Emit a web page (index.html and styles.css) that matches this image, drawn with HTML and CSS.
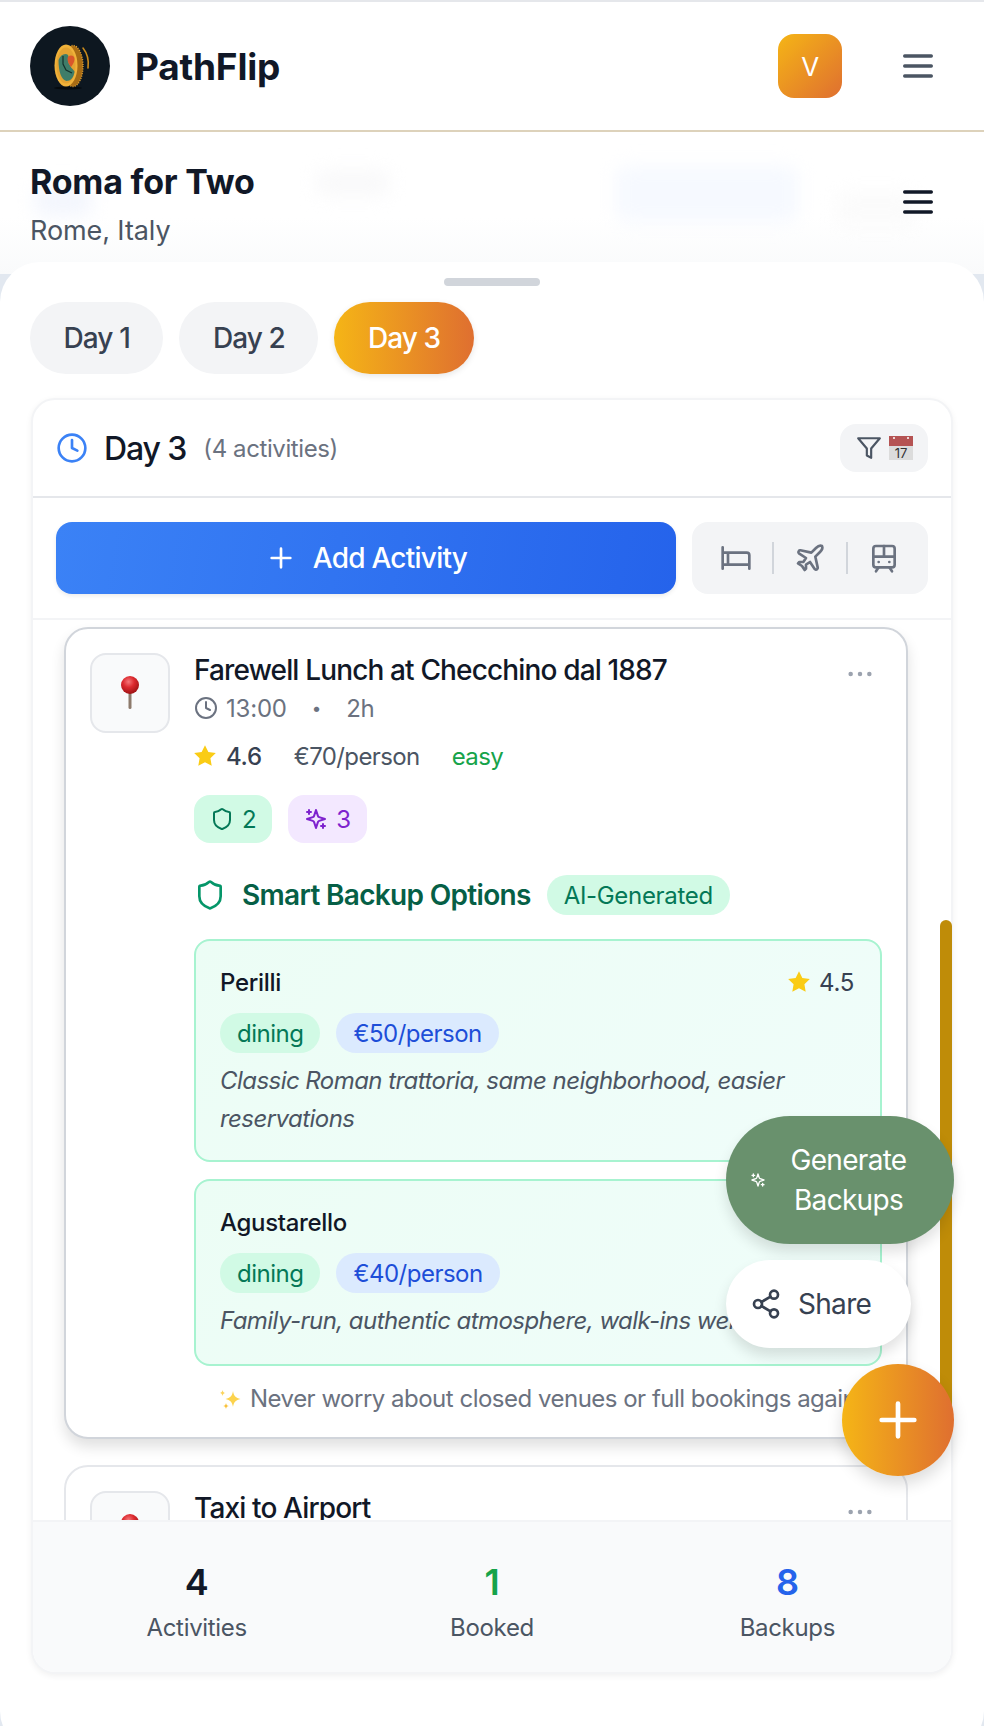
FILE: index.html
```html
<!DOCTYPE html>
<html lang="en">

<head>
    <meta charset="UTF-8">
    <meta name="viewport" content="width=device-width, initial-scale=1.0">
    <title>PathFlip</title>
    <link rel="stylesheet" href="styles.css">
</head>

<body>
    <svg class="sprite" aria-hidden="true">
        <defs>
            <radialGradient id="pinHead" cx="42%" cy="32%" r="70%">
                <stop offset="0" stop-color="#f4777a" />
                <stop offset="0.45" stop-color="#dd2a2f" />
                <stop offset="1" stop-color="#9b1113" />
            </radialGradient>
        </defs>
        <symbol id="i-menu" viewBox="0 0 24 24"><path d="M4 6h16M4 12h16M4 18h16" /></symbol>
        <symbol id="i-clock" viewBox="0 0 24 24"><circle cx="12" cy="12" r="10" /><path d="M12 6v6l4 2" /></symbol>
        <symbol id="i-filter" viewBox="0 0 24 24"><path d="M22 3H2l8 9.46V19l4 2v-8.54L22 3z" /></symbol>
        <symbol id="i-plus" viewBox="0 0 24 24"><path d="M5 12h14M12 5v14" /></symbol>
        <symbol id="i-bed" viewBox="0 0 24 24"><path d="M2 4v16M2 8h18a2 2 0 0 1 2 2v10M2 17h20M6 8v9" /></symbol>
        <symbol id="i-plane" viewBox="0 0 24 24"><path d="M17.8 19.2 16 11l3.5-3.5C21 6 21.5 4 21 3c-1-.5-3 0-4.500 1.500L13 8 4.800 6.200c-.5-.1-.9.1-1.100.5l-.3.5c-.2.5-.1 1 .3 1.300L9 12l-2 3H4l-1 1 3 2 2 3 1-1v-3l3-2 3.500 5.300c.3.4.8.5 1.300.3l.5-.2c.4-.3.6-.7.5-1.200z" /></symbol>
        <symbol id="i-tram" viewBox="0 0 24 24"><rect x="4" y="3" width="16" height="16" rx="2" /><path d="M4 11h16M12 3v8M8 19l-2 3M18 22l-2-3M8 15h.01M16 15h.01" /></symbol>
        <symbol id="i-shield" viewBox="0 0 24 24"><path d="M20 13c0 5-3.500 7.500-7.660 8.950a1 1 0 0 1-.67-.01C7.500 20.500 4 18 4 13V6a1 1 0 0 1 1-1c2 0 4.500-1.200 6.240-2.720a1.170 1.170 0 0 1 1.520 0C14.510 3.810 17 5 19 5a1 1 0 0 1 1 1z" /></symbol>
        <symbol id="i-sparkles" viewBox="0 0 24 24"><path d="M12 3l-1.912 5.813a2 2 0 0 1-1.275 1.275L3 12l5.813 1.912a2 2 0 0 1 1.275 1.275L12 21l1.912-5.813a2 2 0 0 1 1.275-1.275L21 12l-5.813-1.912a2 2 0 0 1-1.275-1.275L12 3z" /><path d="M5 3v4M19 17v4M3 5h4M17 19h4" /></symbol>
        <symbol id="i-share" viewBox="0 0 24 24"><circle cx="18" cy="5" r="3" /><circle cx="6" cy="12" r="3" /><circle cx="18" cy="19" r="3" /><path d="M8.590 13.510l6.830 3.980M15.410 6.510l-6.820 3.980" /></symbol>
        <symbol id="i-star" viewBox="0 0 24 24"><path class="solid" d="M12 2l3.090 6.260L22 9.270l-5 4.870 1.180 6.880L12 17.770l-6.180 3.250L7 14.140 2 9.270l6.910-1.010L12 2z" /></symbol>
        <symbol id="i-dots" viewBox="0 0 24 24"><path d="M5 12h.01M12 12h.01M19 12h.01" /></symbol>
        <symbol id="i-pin" viewBox="0 0 40 40">
            <rect class="solid" x="18.500" y="18" width="3" height="18" rx="1.500" fill="#8d7a6c" />
            <circle class="solid" cx="20" cy="12" r="9" fill="url(#pinHead)" />
        </symbol>
    </svg>

    <header class="app-header">
        <div class="brand">
            <svg class="logo" viewBox="0 0 80 80" aria-hidden="true">
                <circle cx="40" cy="40" r="40" fill="#0d1720" />
                <path d="M53 22c4 5 6 13 5 20" fill="none" stroke="#c98a1c" stroke-width="1.600" stroke-linecap="round" />
                <ellipse cx="38" cy="62" rx="14" ry="1.500" fill="#050a0e" />
                <ellipse cx="43" cy="40" rx="10" ry="20.500" fill="#a86c14" stroke="#e0a032" stroke-width="1.400" stroke-dasharray="1 1.400" />
                <ellipse cx="36" cy="39.500" rx="11.500" ry="21" fill="#f0b23a" />
                <ellipse cx="36" cy="39.500" rx="9.500" ry="18" fill="#e3a332" />
                <path d="M28.500 34c1.500-4 4-6 7-6 2 0 3 1 3 3v6l3 5c2 2 3 3 3 4-1 6-4 9-8 9-5-1-8-9-8-21z" fill="#3f7d69" />
                <path d="M33 30v8l3 6 6 3" fill="none" stroke="#13302b" stroke-width="1.200" />
                <path d="M41 41c-2-3-3.500-5-3.500-8a3.500 3.500 0 0 1 7 0c0 3-1.500 5-3.500 8z" fill="#d9572b" />
            </svg>
            <span class="brand-name">PathFlip</span>
        </div>
        <div class="header-actions">
            <div class="avatar">V</div>
            <svg class="icon menu-icon"><use href="#i-menu" /></svg>
        </div>
    </header>

    <div class="trip-bar">
        <span class="blur-blob blob-a"></span>
        <span class="blur-blob blob-b"></span>
        <span class="blur-blob blob-c"></span>
        <span class="blur-blob blob-d"></span>
        <div class="trip-info">
            <h1>Roma for Two</h1>
            <p>Rome, Italy</p>
        </div>
        <svg class="icon menu-icon dark"><use href="#i-menu" /></svg>
    </div>

    <main class="sheet">
        <div class="handle"></div>

        <nav class="day-tabs">
            <button class="day-tab">Day 1</button>
            <button class="day-tab">Day 2</button>
            <button class="day-tab active">Day 3</button>
        </nav>

        <section class="day-card">
            <div class="day-head">
                <svg class="icon day-clock"><use href="#i-clock" /></svg>
                <h2>Day 3</h2>
                <span class="day-count">(4 activities)</span>
                <div class="filter-box">
                    <svg class="icon filter-icon"><use href="#i-filter" /></svg>
                    <svg class="calendar" viewBox="0 0 24 24" aria-hidden="true">
                        <rect width="24" height="10" fill="#b55353" />
                        <rect y="10" width="24" height="14" fill="#dcdcdc" />
                        <circle cx="5" cy="2" r="1" fill="#fff" />
                        <circle cx="19" cy="2" r="1" fill="#fff" />
                        <text x="12" y="22" text-anchor="middle" class="calendar-day">17</text>
                    </svg>
                </div>
            </div>

            <div class="day-actions">
                <button class="add-activity">
                    <svg class="icon add-plus"><use href="#i-plus" /></svg>
                    Add Activity
                </button>
                <div class="quick-add">
                    <svg class="icon"><use href="#i-bed" /></svg>
                    <span class="quick-sep"></span>
                    <svg class="icon"><use href="#i-plane" /></svg>
                    <span class="quick-sep"></span>
                    <svg class="icon"><use href="#i-tram" /></svg>
                </div>
            </div>

            <div class="activity-list">
                <article class="activity open">
                    <div class="activity-thumb"><svg class="pin"><use href="#i-pin" /></svg></div>
                    <div class="activity-body">
                        <div class="activity-title-row">
                            <h3>Farewell Lunch at Checchino dal 1887</h3>
                            <svg class="icon dots"><use href="#i-dots" /></svg>
                        </div>
                        <div class="time-row">
                            <svg class="icon time-icon"><use href="#i-clock" /></svg>
                            <span>13:00</span>
                            <span class="time-dot">•</span>
                            <span>2h</span>
                        </div>
                        <div class="meta-row">
                            <span class="rating"><svg class="star"><use href="#i-star" /></svg>4.6</span>
                            <span class="price">€70/person</span>
                            <span class="easy">easy</span>
                        </div>
                        <div class="badge-row">
                            <span class="count-badge green"><svg class="icon"><use href="#i-shield" /></svg>2</span>
                            <span class="count-badge purple"><svg class="icon"><use href="#i-sparkles" /></svg>3</span>
                        </div>

                        <div class="backup-head">
                            <svg class="icon backup-shield"><use href="#i-shield" /></svg>
                            <h4>Smart Backup Options</h4>
                            <span class="ai-tag">AI-Generated</span>
                        </div>

                        <div class="backup-card">
                            <div class="backup-top">
                                <span class="backup-name">Perilli</span>
                                <span class="backup-rating"><svg class="star"><use href="#i-star" /></svg>4.5</span>
                            </div>
                            <div class="backup-tags">
                                <span class="tag tag-green">dining</span>
                                <span class="tag tag-blue">€50/person</span>
                            </div>
                            <p>Classic Roman trattoria, same neighborhood, easier reservations</p>
                        </div>

                        <div class="backup-card">
                            <div class="backup-top">
                                <span class="backup-name">Agustarello</span>
                            </div>
                            <div class="backup-tags">
                                <span class="tag tag-green">dining</span>
                                <span class="tag tag-blue">€40/person</span>
                            </div>
                            <p class="one-line">Family-run, authentic atmosphere, walk-ins welcome</p>
                        </div>

                        <div class="backup-note">
                            <svg class="note-spark" viewBox="0 0 24 24" aria-hidden="true">
                                <path d="M13 4c.8 5 2.800 7 7.500 8-4.700 1-6.700 3-7.500 8-.8-5-2.800-7-7.500-8 4.700-1 6.700-3 7.500-8z" fill="#fcd34d" />
                                <path d="M2.500 3c.4 2 1 2.600 3 3-2 .4-2.600 1-3 3-.4-2-1-2.600-3-3 2-.4 2.600-1 3-3z" fill="#fbd35a" />
                                <path d="M6 16c.4 2 1 2.600 3 3-2 .4-2.600 1-3 3-.4-2-1-2.600-3-3 2-.4 2.600-1 3-3z" fill="#f9c23c" />
                            </svg>
                            Never worry about closed venues or full bookings again
                        </div>
                    </div>
                </article>

                <article class="activity">
                    <div class="activity-thumb"><svg class="pin"><use href="#i-pin" /></svg></div>
                    <div class="activity-body">
                        <div class="activity-title-row">
                            <h3>Taxi to Airport</h3>
                            <svg class="icon dots"><use href="#i-dots" /></svg>
                        </div>
                    </div>
                </article>
            </div>

            <div class="day-stats">
                <div class="stat"><strong>4</strong><span>Activities</span></div>
                <div class="stat"><strong class="stat-green">1</strong><span>Booked</span></div>
                <div class="stat"><strong class="stat-blue">8</strong><span>Backups</span></div>
            </div>
        </section>
    </main>

    <div class="scroll-thumb"></div>

    <div class="fab-stack">
        <button class="fab-generate">
            <svg class="icon"><use href="#i-sparkles" /></svg>
            <span>Generate Backups</span>
        </button>
        <button class="fab-share">
            <svg class="icon"><use href="#i-share" /></svg>
            Share
        </button>
        <button class="fab-plus"><svg class="icon"><use href="#i-plus" /></svg></button>
    </div>
</body>

</html>
```

FILE: styles.css
```css
* {
    box-sizing: border-box;
}

html,
body {
    margin: 0;
    height: 1726px;
    overflow: hidden;
}

body {
    position: relative;
    font-family: Inter, "Noto Sans", sans-serif;
    letter-spacing: -0.02em;
    background-color: #e2e8f0;
    color: #111827;
    border-top: 2px solid #e5e7eb;
}

h1,
h2,
h3,
h4,
p {
    margin: 0;
}

button {
    font-family: inherit;
    letter-spacing: inherit;
    border: none;
    cursor: pointer;
}

/* holds the symbols, takes no room */
.sprite {
    position: absolute;
    width: 0;
    height: 0;
}

.icon {
    fill: none;
    stroke: currentColor;
    stroke-width: 2;
    stroke-linecap: round;
    stroke-linejoin: round;
    flex: none;
}

.solid {
    stroke: none;
}

/* top header */
.app-header {
    height: 130px;
    padding: 0 46px 0 30px;
    display: flex;
    align-items: center;
    justify-content: space-between;
    background-color: #fff;
    border-bottom: 2px solid #ddd2bb;
}

.brand {
    display: flex;
    align-items: center;
    gap: 25px;
}

.logo {
    width: 80px;
    height: 80px;
}

.brand-name {
    font-size: 37px;
    font-weight: 700;
    letter-spacing: -0.2px;
}

.header-actions {
    display: flex;
    align-items: center;
    gap: 56px;
}

.avatar {
    width: 64px;
    height: 64px;
    border-radius: 16px;
    background: linear-gradient(135deg, #f5b516, #df6f30);
    color: #fff;
    font-size: 26px;
    display: flex;
    align-items: center;
    justify-content: center;
}

.menu-icon {
    width: 40px;
    height: 40px;
    color: #4b5563;
}

.menu-icon.dark {
    color: #111827;
    margin-top: 20px;
}

/* blurred trip bar behind the sheet */
.trip-bar {
    position: relative;
    height: 142px;
    padding: 30px 46px 0 30px;
    display: flex;
    justify-content: space-between;
    align-items: flex-start;
    background: linear-gradient(#fff 60%, #f9fafb);
    overflow: hidden;
}

.trip-info,
.trip-bar .menu-icon {
    position: relative;
}

.trip-info h1 {
    font-size: 34px;
    line-height: 40px;
    font-weight: 700;
    letter-spacing: -0.2px;
}

.trip-info p {
    margin-top: 12px;
    font-size: 27px;
    line-height: 34px;
    letter-spacing: -0.1px;
    color: #4b5563;
}

.blur-blob {
    position: absolute;
    filter: blur(9px);
    border-radius: 10px;
}

.blob-a {
    left: 34px;
    top: 54px;
    width: 58px;
    height: 30px;
    background-color: #f3f6fd;
}

.blob-b {
    left: 316px;
    top: 38px;
    width: 74px;
    height: 26px;
    background-color: #f9f9fa;
}

.blob-c {
    left: 616px;
    top: 34px;
    width: 182px;
    height: 56px;
    background-color: #f6f9ff;
}

.blob-d {
    left: 836px;
    top: 60px;
    width: 80px;
    height: 34px;
    background-color: #fbfbfb;
}

/* bottom sheet */
.sheet {
    position: absolute;
    left: 0;
    right: 0;
    top: 260px;
    height: 1489px;
    padding: 16px 31px 0;
    background-color: #fff;
    border-radius: 40px;
    display: flex;
    flex-direction: column;
}

.handle {
    align-self: center;
    width: 96px;
    height: 8px;
    border-radius: 4px;
    background-color: #d1d5db;
}

.day-tabs {
    margin: 16px 0 24px -1px;
    display: flex;
    gap: 16px;
}

.day-tab {
    height: 72px;
    padding: 0 33.500px;
    border-radius: 36px;
    background-color: #f3f4f6;
    color: #374151;
    font-size: 28px;
    font-weight: 500;
    letter-spacing: -0.9px;
}

.day-tab.active {
    background: linear-gradient(90deg, #f5b516, #df6f30);
    color: #fff;
    box-shadow: 0 2px 6px rgba(0, 0, 0, 0.1);
}

.day-card {
    height: 1276px;
    border: 2px solid #f3f4f6;
    border-radius: 24px;
    box-shadow: 0 2px 6px rgba(0, 0, 0, 0.06);
    display: flex;
    flex-direction: column;
    overflow: hidden;
    background-color: #fff;
}

.day-head {
    height: 98px;
    padding: 0 23px;
    flex: none;
    display: flex;
    align-items: center;
    border-bottom: 2px solid #e5e7eb;
}

.day-clock {
    width: 32px;
    height: 32px;
    color: #3b82f6;
    margin-right: 16px;
}

.day-head h2 {
    font-size: 32px;
    font-weight: 500;
    letter-spacing: -1.1px;
}

.day-count {
    margin-left: 17px;
    font-size: 24px;
    letter-spacing: -0.4px;
    color: #6b7280;
}

.filter-box {
    margin-left: auto;
    width: 88px;
    height: 48px;
    border-radius: 16px;
    background-color: #f3f4f6;
    display: flex;
    align-items: center;
    justify-content: center;
    gap: 7px;
}

.filter-icon {
    width: 26px;
    height: 26px;
    color: #4b5563;
}

.calendar {
    width: 24px;
    height: 24px;
}

.calendar-day {
    font-size: 13px;
    letter-spacing: 0;
    fill: #333;
}

.day-actions {
    height: 122px;
    padding: 24px 23px;
    flex: none;
    display: flex;
    gap: 16px;
    border-bottom: 2px solid #f3f4f6;
}

.add-activity {
    flex: 1;
    border-radius: 16px;
    background: linear-gradient(100deg, #3b82f6, #2563eb);
    box-shadow: 0 2px 4px rgba(0, 0, 0, 0.08);
    color: #fff;
    font-size: 28px;
    font-weight: 500;
    letter-spacing: -0.75px;
    display: flex;
    align-items: center;
    justify-content: center;
    gap: 16px;
}

.add-plus {
    width: 32px;
    height: 32px;
}

.quick-add {
    width: 236px;
    padding: 0 28px;
    border-radius: 16px;
    background-color: #f3f4f6;
    color: #6b7280;
    display: flex;
    align-items: center;
    justify-content: center;
    gap: 20px;
}

.quick-add .icon {
    width: 32px;
    height: 32px;
}

.quick-sep {
    width: 2px;
    height: 32px;
    background-color: #d1d5db;
}

/* activity list */
.activity-list {
    flex: 1;
    min-height: 0;
    overflow: hidden;
    padding: 7px 43px 0 31px;
    display: flex;
    flex-direction: column;
    gap: 26px;
}

.activity {
    flex: none;
    padding: 24px;
    border: 2px solid #e5e7eb;
    border-radius: 24px;
    background-color: #fff;
    display: flex;
    gap: 24px;
}

.activity.open {
    padding-bottom: 22px;
    border-color: #d1d5db;
    box-shadow: 0 8px 14px rgba(0, 0, 0, 0.12);
}

.activity-thumb {
    width: 80px;
    height: 80px;
    flex: none;
    border: 2px solid #e5e7eb;
    border-radius: 16px;
    background-color: #f9fafb;
    display: flex;
    align-items: center;
    justify-content: center;
}

.pin {
    width: 40px;
    height: 40px;
}

.activity-body {
    flex: 1;
    min-width: 0;
}

.activity-title-row {
    display: flex;
    justify-content: space-between;
    align-items: center;
    height: 36px;
    margin-top: -1px;
}

.activity-title-row h3 {
    font-size: 28px;
    font-weight: 500;
    letter-spacing: -0.85px;
    white-space: nowrap;
}

.dots {
    width: 32px;
    height: 32px;
    stroke-width: 3.400;
    color: #9ca3af;
    margin: 8px 6px 0 0;
}

.time-row {
    margin-top: 4px;
    height: 32px;
    display: flex;
    align-items: center;
    font-size: 24px;
    letter-spacing: -0.2px;
    color: #6b7280;
}

.time-icon {
    width: 24px;
    height: 24px;
    margin-right: 8px;
}

.time-dot {
    margin: 0 25px;
    font-size: 17px;
}

.meta-row {
    margin-top: 16px;
    height: 32px;
    display: flex;
    align-items: center;
    gap: 32px;
    font-size: 24px;
}

.star {
    width: 26px;
    height: 26px;
    fill: #facc15;
    margin-left: -2px;
}

.rating {
    display: flex;
    align-items: center;
    gap: 8px;
    font-weight: 500;
    color: #374151;
}

.price {
    letter-spacing: -0.6px;
    color: #4b5563;
}

.easy {
    letter-spacing: -0.6px;
    color: #16a34a;
}

.badge-row {
    margin-top: 23px;
    display: flex;
    gap: 16px;
}

.count-badge {
    height: 48px;
    padding: 0 16px;
    border-radius: 16px;
    font-size: 24px;
    display: flex;
    align-items: center;
    gap: 8px;
}

.count-badge .icon {
    width: 24px;
    height: 24px;
}

.count-badge.green {
    background-color: #d1fae5;
    color: #047857;
}

.count-badge.purple {
    background-color: #f3e8ff;
    color: #7e22ce;
}

.backup-head {
    margin-top: 32px;
    height: 40px;
    display: flex;
    align-items: center;
}

.backup-shield {
    width: 32px;
    height: 32px;
    color: #059669;
    margin-right: 16px;
}

.backup-head h4 {
    font-size: 28px;
    font-weight: 600;
    letter-spacing: -0.68px;
    color: #065f46;
}

.ai-tag {
    margin-left: 16px;
    height: 40px;
    padding: 0 17px;
    border-radius: 20px;
    background-color: #d1fae5;
    color: #047857;
    font-size: 24px;
    display: flex;
    align-items: center;
}

.backup-card {
    margin-top: 24px;
    padding: 24px 24px 22px;
    border: 2px solid #a7f3d0;
    border-radius: 16px;
    background: linear-gradient(135deg, #ecfdf5, #f0fdfa);
}

.backup-card + .backup-card {
    margin-top: 17px;
    padding-bottom: 24px;
}

.backup-top {
    height: 34px;
    display: flex;
    justify-content: space-between;
    align-items: center;
    font-size: 24px;
}

.backup-name {
    font-weight: 500;
}

.backup-rating {
    display: flex;
    align-items: center;
    gap: 7px;
    margin-right: 2px;
    color: #374151;
}

.backup-tags {
    margin-top: 14px;
    display: flex;
    gap: 16px;
}

.tag {
    height: 40px;
    padding: 0 17px;
    border-radius: 20px;
    font-size: 24px;
    letter-spacing: -0.5px;
    display: flex;
    align-items: center;
}

.tag-green {
    background-color: #d1fae5;
    color: #047857;
}

.tag-blue {
    background-color: #dbeafe;
    color: #1d4ed8;
}

.backup-card p {
    margin-top: 9px;
    font-size: 24px;
    line-height: 38px;
    letter-spacing: -0.55px;
    font-style: italic;
    color: #4b5563;
}

.backup-card p.one-line {
    white-space: nowrap;
}

.backup-note {
    margin: 17px 0 0 26px;
    font-size: 24px;
    line-height: 32px;
    letter-spacing: -0.5px;
    color: #6b7280;
    white-space: nowrap;
    display: flex;
    align-items: center;
    gap: 6px;
}

.note-spark {
    width: 24px;
    height: 24px;
}

/* totals */
.day-stats {
    height: 152px;
    flex: none;
    padding: 10px 16px 0;
    display: grid;
    grid-template-columns: repeat(3, 1fr);
    align-items: center;
    background-color: #f9fafb;
    border-top: 2px solid #f3f4f6;
    position: relative;
}

.stat {
    text-align: center;
}

.stat strong {
    display: block;
    font-size: 36px;
    line-height: 44px;
    font-weight: 600;
}

.stat span {
    display: block;
    margin-top: 8px;
    font-size: 24px;
    line-height: 32px;
    color: #4b5563;
}

.stat-green {
    color: #16a34a;
}

.stat-blue {
    color: #2563eb;
}

/* things floating over the sheet */
.scroll-thumb {
    position: absolute;
    left: 940px;
    top: 918px;
    width: 12px;
    height: 500px;
    border-radius: 6px;
    background-color: #bf8c08;
}

.fab-stack {
    position: absolute;
    left: 726px;
    top: 1114px;
    width: 228px;
    display: flex;
    flex-direction: column;
    gap: 16px;
}

.fab-generate {
    height: 128px;
    padding: 0 38px 0 24px;
    border-radius: 64px;
    background-color: #69916d;
    color: #fff;
    font-size: 28px;
    line-height: 40px;
    letter-spacing: -0.7px;
    display: flex;
    align-items: center;
    gap: 15px;
    box-shadow: 0 8px 14px rgba(0, 0, 0, 0.12);
}

.fab-generate .icon {
    width: 16px;
    height: 16px;
}

.fab-generate span {
    flex: 1;
    text-align: center;
}

.fab-share {
    align-self: flex-start;
    width: 185px;
    height: 88px;
    padding: 0 24px;
    border-radius: 44px;
    background-color: #fff;
    color: #374151;
    font-size: 28px;
    letter-spacing: -0.7px;
    display: flex;
    align-items: center;
    gap: 16px;
    box-shadow: 0 8px 14px rgba(0, 0, 0, 0.12);
}

.fab-share .icon {
    width: 32px;
    height: 32px;
}

.fab-plus {
    align-self: flex-end;
    width: 112px;
    height: 112px;
    border-radius: 50%;
    padding: 0;
    background: linear-gradient(90deg, #f5b516, #df6f30);
    color: #fff;
    display: flex;
    align-items: center;
    justify-content: center;
    box-shadow: 0 8px 16px rgba(0, 0, 0, 0.14);
}

.fab-plus .icon {
    width: 56px;
    height: 56px;
}
```
